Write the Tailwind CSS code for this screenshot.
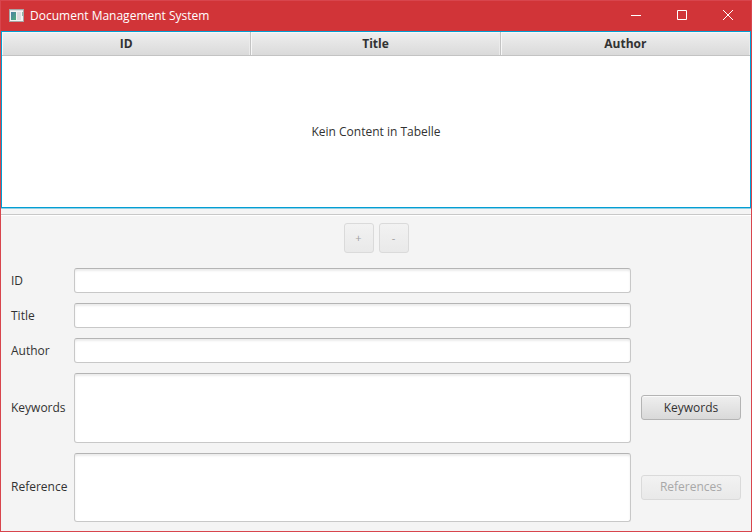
<!DOCTYPE html>
<html lang="en">
<head>
<meta charset="utf-8">
<meta name="viewport" content="width=device-width, initial-scale=1">
<title>Document Management System</title>
<script src="https://cdn.jsdelivr.net/npm/@tailwindcss/browser@4"></script>
</head>
<body class="flex min-h-screen flex-col border border-[#d8454d] bg-[#f4f4f4] font-['Segoe_UI','Open_Sans',sans-serif] text-xs text-[#323232]">
  <header class="flex h-[30px] shrink-0 items-center bg-[#d13438] pl-2 text-white">
    <svg class="mr-[5px] h-4 w-4" viewBox="0 0 16 16" aria-hidden="true">
      <defs>
        <linearGradient id="pane" x1="0" y1="0" x2="1" y2="1">
          <stop offset="0" stop-color="#4a7fa5"/>
          <stop offset="1" stop-color="#4fae7c"/>
        </linearGradient>
      </defs>
      <rect x="0.5" y="1.5" width="14" height="12" fill="#f3f3f3" stroke="#a9a5a5"/>
      <rect x="1" y="2" width="13" height="1" fill="#d9dde0"/>
      <rect x="2" y="4" width="5" height="8" fill="url(#pane)"/>
      <rect x="8" y="4" width="4" height="8" fill="#dcdcdf"/>
      <rect x="13" y="4" width="1" height="4" fill="#8fb9a8"/>
    </svg>
    <h1 class="flex-1">Document Management System</h1>
    <button type="button" aria-label="Minimize" class="flex h-full w-[46px] items-center justify-center">
      <svg class="h-3 w-3" viewBox="0 0 12 12" fill="none" stroke="currentColor"><path d="M1 5.500h10"/></svg>
    </button>
    <button type="button" aria-label="Maximize" class="flex h-full w-[46px] items-center justify-center">
      <svg class="h-3 w-3" viewBox="0 0 12 12" fill="none" stroke="currentColor"><path d="M1.500 0.500h9v9h-9z"/></svg>
    </button>
    <button type="button" aria-label="Close" class="flex h-full w-[46px] items-center justify-center">
      <svg class="h-3 w-3" viewBox="0 0 12 12" fill="none" stroke="currentColor"><path d="M1 0l10 10M11 0L1 10"/></svg>
    </button>
  </header>

  <main class="flex flex-1 flex-col">
    <section class="h-[177px] border border-[#039ed3] bg-white shadow-[0_1px_0_#8fd0e6]">
      <table class="h-full w-full table-fixed border-separate border-spacing-0">
        <thead>
          <tr class="h-6 bg-linear-to-b from-[#efefef] to-[#d9d9d9] text-[#323232]">
            <th scope="col" class="border-r border-b border-[#c3c3c3] p-0 font-bold shadow-[inset_1px_1px_0_#f7f7f7,inset_-1px_0_0_#ebebeb]">ID</th>
            <th scope="col" class="border-r border-b border-[#c3c3c3] p-0 font-bold shadow-[inset_1px_1px_0_#f7f7f7,inset_-1px_0_0_#ebebeb]">Title</th>
            <th scope="col" class="border-b border-[#c3c3c3] p-0 font-bold shadow-[inset_1px_1px_0_#f7f7f7,inset_-1px_0_0_#ebebeb]">Author</th>
          </tr>
        </thead>
        <tbody>
          <tr><td colspan="3" class="p-0 text-center">Kein Content in Tabelle</td></tr>
        </tbody>
      </table>
    </section>

    <hr class="mt-1.5 h-0.5 border-t border-b border-t-[#c8c8c8] border-b-white">

    <div class="flex justify-center gap-[5px] pt-[7px]">
      <button type="button" disabled aria-label="Add" class="h-[30px] w-[30px] rounded-[3px] border border-[#dadada] bg-linear-to-b from-[#f2f2f2] to-[#e9e9e9] text-[11px] text-[#a0a0a0]">+</button>
      <button type="button" disabled aria-label="Remove" class="h-[30px] w-[30px] rounded-[3px] border border-[#dadada] bg-linear-to-b from-[#f2f2f2] to-[#e9e9e9] text-[11px] text-[#a0a0a0]">-</button>
    </div>

    <form class="grid flex-1 grid-cols-[53px_1fr_100px] grid-rows-[25px_25px_25px_1fr_1fr] items-center gap-2.5 px-2.5 pt-[15px] pb-[9px]">
      <label for="id">ID</label>
      <input id="id" type="text" class="h-full w-full rounded-[3px] border border-[#c8c8c8] border-t-[#b4b4b4] bg-white px-2 shadow-[inset_0_2px_2px_#ececec] outline-none">
      <span></span>

      <label for="title">Title</label>
      <input id="title" type="text" class="h-full w-full rounded-[3px] border border-[#c8c8c8] border-t-[#b4b4b4] bg-white px-2 shadow-[inset_0_2px_2px_#ececec] outline-none">
      <span></span>

      <label for="author">Author</label>
      <input id="author" type="text" class="h-full w-full rounded-[3px] border border-[#c8c8c8] border-t-[#b4b4b4] bg-white px-2 shadow-[inset_0_2px_2px_#ececec] outline-none">
      <span></span>

      <label for="keywords">Keywords</label>
      <textarea id="keywords" class="h-full w-full resize-none rounded-[3px] border border-[#c8c8c8] border-t-[#b4b4b4] bg-white px-2 py-1 shadow-[inset_0_2px_2px_#ececec] outline-none"></textarea>
      <button type="button" class="h-[25px] rounded-[3px] border border-[#b4b4b4] bg-linear-to-b from-[#efefef] to-[#d9d9d9] shadow-[inset_0_1px_0_#fafafa]">Keywords</button>

      <label for="reference">Reference</label>
      <textarea id="reference" class="h-full w-full resize-none rounded-[3px] border border-[#c8c8c8] border-t-[#b4b4b4] bg-white px-2 py-1 shadow-[inset_0_2px_2px_#ececec] outline-none"></textarea>
      <button type="button" disabled class="h-[25px] rounded-[3px] border border-[#dadada] bg-linear-to-b from-[#f2f2f2] to-[#e9e9e9] text-[#a8a8a8]">References</button>
    </form>
  </main>
</body>
</html>
